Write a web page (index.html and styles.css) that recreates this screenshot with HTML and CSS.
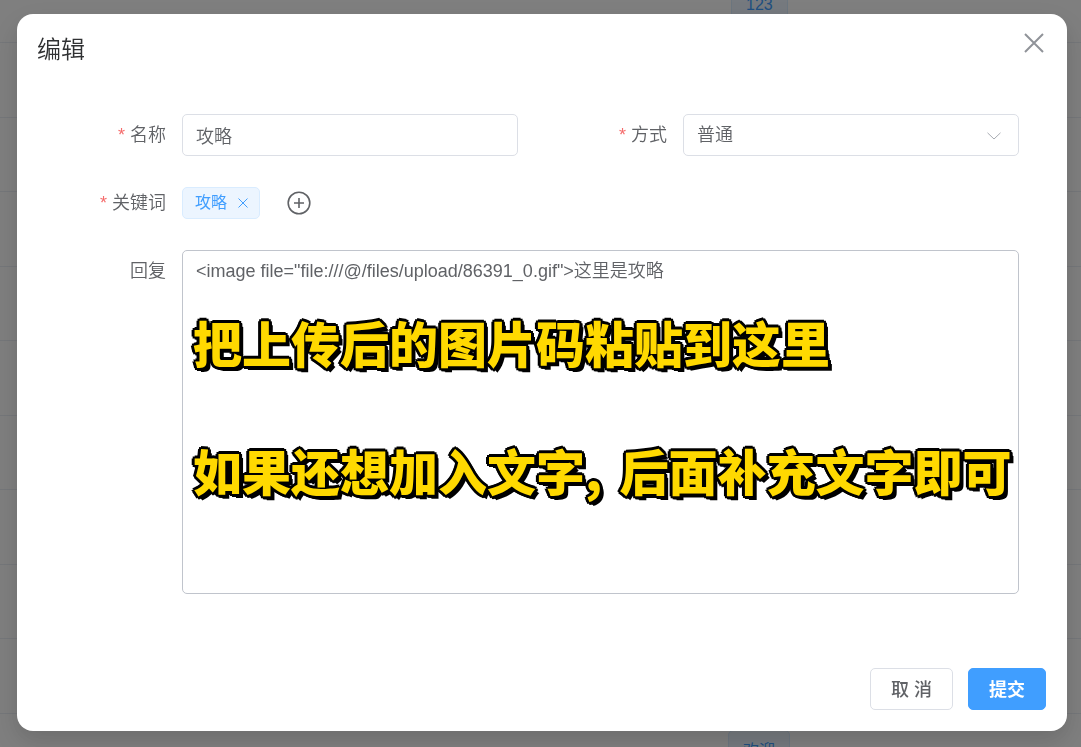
FILE: index.html
```html
<!DOCTYPE html>
<html lang="zh-CN">
<head>
    <meta charset="UTF-8">
    <meta name="viewport" content="width=device-width, initial-scale=1.0">
    <title>编辑</title>
    <link rel="stylesheet" href="styles.css">
</head>
<body>
    <div class="page-list">
        <div class="row first"><span class="tag-large">123</span></div>
        <div class="row"></div>
        <div class="row"></div>
        <div class="row"></div>
        <div class="row"></div>
        <div class="row"></div>
        <div class="row"></div>
        <div class="row"></div>
        <div class="row"></div>
        <div class="row"></div>
        <div class="row"><span class="tag-large">欢迎</span></div>
    </div>

    <div class="overlay">
        <div class="dialog" role="dialog" aria-labelledby="dialog-title">
            <header class="dialog-header">
                <h1 class="dialog-title" id="dialog-title">编辑</h1>
                <button class="dialog-close" type="button" aria-label="关闭">
                    <svg viewBox="0 0 20 20" width="20" height="20"><path d="M1 1L19 19M19 1L1 19"/></svg>
                </button>
            </header>

            <form class="form" id="edit-form">
                <div class="form-item">
                    <label class="label required" for="name">名称</label>
                    <input class="control" id="name" type="text" value="攻略">
                </div>
                <div class="form-item">
                    <label class="label required" for="mode">方式</label>
                    <div class="select-wrap">
                        <select class="control" id="mode">
                            <option>普通</option>
                        </select>
                        <svg class="arrow" viewBox="0 0 14 8" width="14" height="8"><path d="M0.5 0.8L7 7L13.5 0.8"/></svg>
                    </div>
                </div>
                <div class="form-item wide">
                    <span class="label required">关键词</span>
                    <div class="tags">
                        <span class="tag">攻略
                            <button class="tag-close" type="button" aria-label="删除">
                                <svg viewBox="0 0 10 10" width="10" height="10"><path d="M0.5 0.5L9.5 9.5M9.5 0.5L0.5 9.5"/></svg>
                            </button>
                        </span>
                        <button class="add" type="button" aria-label="添加">
                            <svg viewBox="0 0 24 24" width="24" height="24"><circle cx="12" cy="12" r="10.8"/><path d="M12 7V17M7 12H17"/></svg>
                        </button>
                    </div>
                </div>
                <div class="form-item wide">
                    <label class="label" for="reply">回复</label>
                    <div class="reply-wrap">
                        <textarea class="control reply" id="reply" spellcheck="false">&lt;image file="file:///@/files/upload/86391_0.gif"&gt;这里是攻略</textarea>
                        <div class="notes">
                            <p class="note">把上传后的图片码粘贴到这里</p>
                            <p class="note"><span class="clause">如果还想加入文字,</span> 后面补充文字即可</p>
                        </div>
                    </div>
                </div>
            </form>

            <footer class="dialog-footer">
                <button class="btn" type="button">取 消</button>
                <button class="btn primary" type="submit" form="edit-form">提交</button>
            </footer>
        </div>
    </div>
</body>
</html>
```
FILE: styles.css
```css
* {
    box-sizing: border-box;
}
body {
    margin: 0;
    height: 100vh;
    overflow: hidden;
    background-color: #fff;
    color: #606266;
    font-family: "Liberation Sans", "Noto Sans CJK SC", sans-serif;
    font-size: 18px;
}
button, input, select, textarea {
    font: inherit;
    color: inherit;
}
button {
    padding: 0;
    border: 0;
    background: none;
    cursor: pointer;
}
svg {
    display: block;
    fill: none;
    stroke: currentColor;
}

/* list behind the dialog */
.page-list {
    height: 100%;
    overflow: hidden;
}
.row {
    display: flex;
    align-items: center;
    height: 74px;
    padding-left: 728px;
    border-bottom: 1px solid #ebeef5;
}
.row:nth-child(even) {
    height: 75px;
}
.row.first {
    height: 76px;
    margin-top: -33px;
    padding-left: 731px;
}
.tag-large {
    height: 42px;
    padding: 0 14px;
    border: 1px solid #d9ecff;
    border-radius: 5px;
    background-color: #ecf5ff;
    color: #409eff;
    font-size: 16px;
    line-height: 40px;
}

/* dialog */
.overlay {
    position: fixed;
    inset: 0;
    padding: 14px 14px 0 17px;
    background-color: rgba(0, 0, 0, 0.5);
}
.dialog {
    padding: 19px 21px 21px 20px;
    border-radius: 16px;
    background-color: #fff;
    box-shadow: 0 12px 32px 4px rgba(0, 0, 0, 0.08), 0 8px 20px rgba(0, 0, 0, 0.08);
}
.dialog-header {
    display: flex;
    justify-content: space-between;
    height: 81px;
}
.dialog-title {
    margin: 0;
    color: #303133;
    font-size: 24px;
    font-weight: 350;
    line-height: 34px;
}
.dialog-close {
    width: 22px;
    height: 20px;
    color: #909399;
}
.dialog-close svg {
    stroke-width: 2;
}
.form {
    display: grid;
    grid-template-columns: 1fr 1fr;
    gap: 26px 32px;
    padding: 0 27px 0 12px;
}
.form-item {
    display: flex;
}
.wide {
    grid-column: 1 / -1;
}
.label {
    flex: none;
    width: 133px;
    padding-right: 16px;
    font-weight: 350;
    line-height: 42px;
    text-align: right;
}
.required::before {
    content: "*";
    margin-right: 5px;
    color: #f56c6c;
}
.control {
    display: block;
    width: 100%;
    height: 42px;
    padding: 0 13px;
    border: 1px solid #dcdfe6;
    border-radius: 5px;
    background-color: #fff;
    font-weight: 350;
    outline: none;
}
.select-wrap, .reply-wrap {
    position: relative;
    flex: 1;
}
select.control {
    appearance: none;
}
.arrow {
    position: absolute;
    top: 18px;
    right: 18px;
    color: #a8abb2;
    pointer-events: none;
}
.tags {
    display: flex;
    align-items: center;
    gap: 27px;
}
.tag {
    display: flex;
    align-items: center;
    gap: 11px;
    height: 32px;
    padding: 0 11px 0 12px;
    border: 1px solid #d9ecff;
    border-radius: 5px;
    background-color: #ecf5ff;
    color: #409eff;
    font-size: 16px;
    line-height: 28px;
}
.add svg {
    stroke-width: 1.6;
}
.reply {
    height: 344px;
    padding: 6px 13px;
    border-color: #c0c4cc;
    line-height: 28px;
    resize: none;
}
/* captions drawn over the text area */
.notes {
    position: absolute;
    top: 56px;
    left: 11px;
    pointer-events: none;
}
.note {
    margin: 0 0 56px;
    color: #ffd900;
    font-family: "Noto Sans CJK SC", sans-serif;
    font-size: 49px;
    font-weight: 900;
    line-height: 72px;
    white-space: nowrap;
    text-shadow: 3px 0 #000, -3px 0 #000, 0 3px #000, 0 -3px #000,
        2px -2px #000, -2px 2px #000, -2px -2px #000,
        3px 1px #000, 1px 3px #000, 3px 3px #000, 4px 4px #000;
}
.clause {
    margin-right: 6px;
}
.dialog-footer {
    display: flex;
    justify-content: flex-end;
    gap: 15px;
    margin-top: 74px;
}
.btn {
    height: 42px;
    padding: 0 20px 2px;
    border: 1px solid #dcdfe6;
    border-radius: 5px;
    font-weight: 500;
}
.primary {
    border-color: #409eff;
    background-color: #409eff;
    color: #fff;
    font-weight: 700;
}
```
